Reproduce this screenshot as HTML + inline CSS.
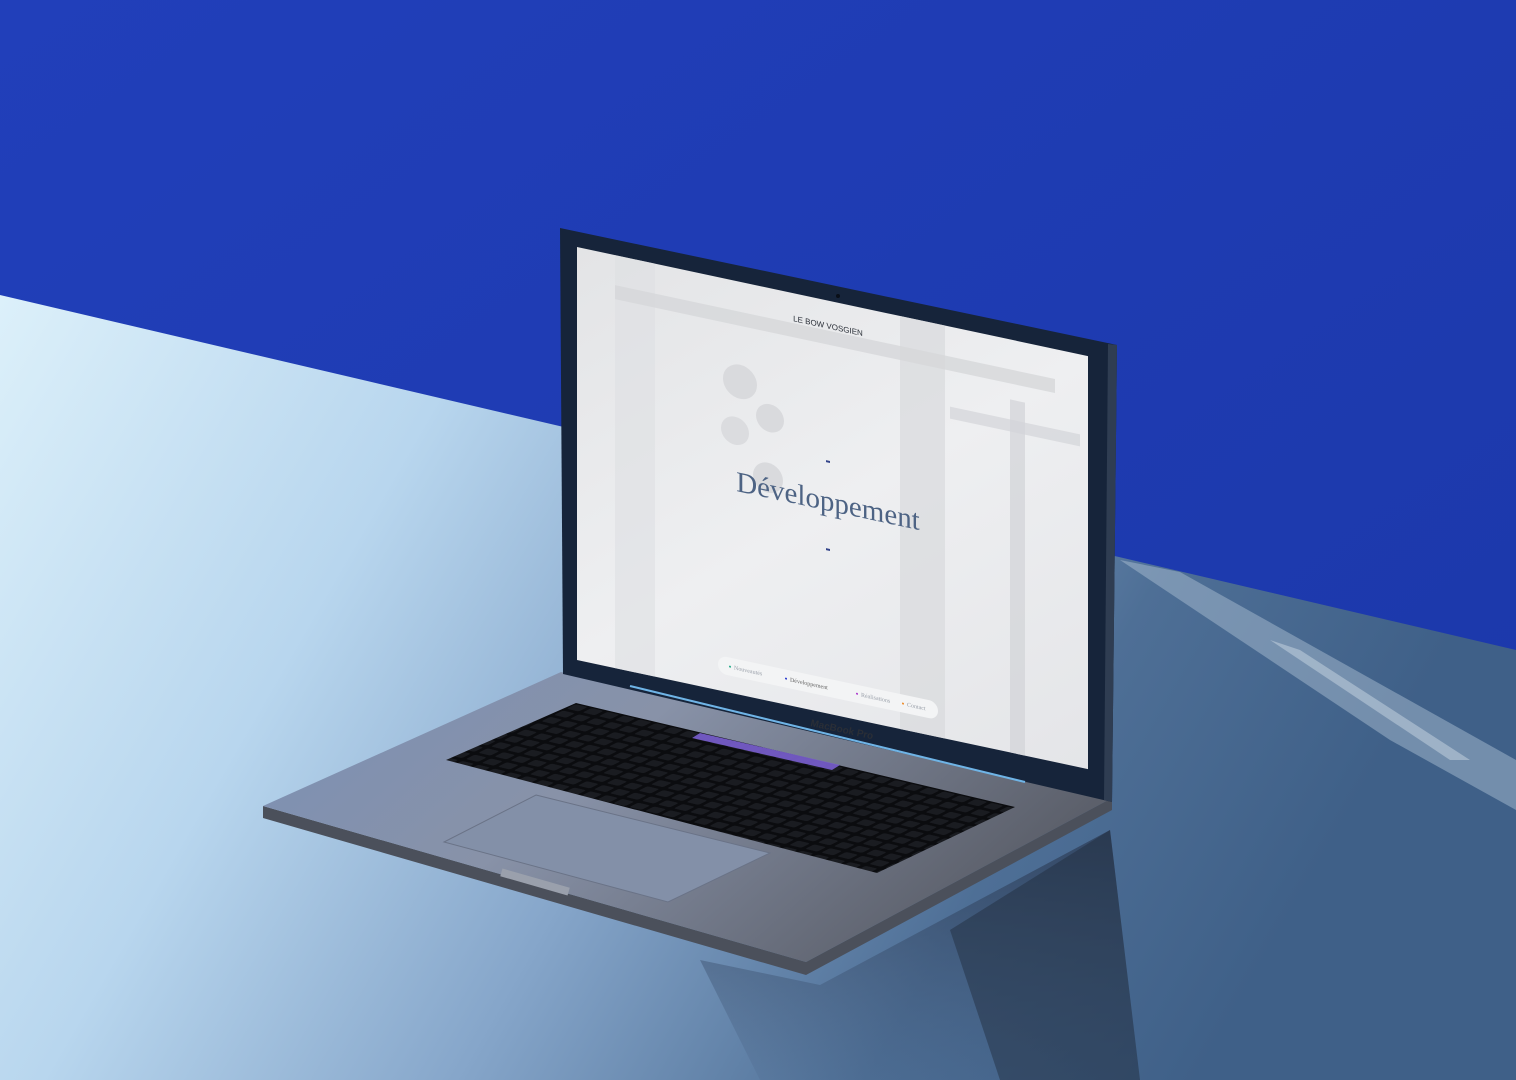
<!DOCTYPE html>
<html><head><meta charset="utf-8"><style>
html,body{margin:0;padding:0;width:1516px;height:1080px;overflow:hidden;background:#1e3cb6}
svg{display:block}
</style></head><body>
<svg width="1516" height="1080" viewBox="0 0 1516 1080" xmlns="http://www.w3.org/2000/svg">
<defs>
<linearGradient id="wall" x1="0" y1="0" x2="1" y2="1">
<stop offset="0" stop-color="#213fba"/><stop offset="1" stop-color="#1b37a8"/></linearGradient>
<linearGradient id="table" x1="0" y1="0" x2="1" y2="0.3">
<stop offset="0" stop-color="#dcf0fa"/><stop offset="0.3" stop-color="#b8d6ee"/>
<stop offset="0.55" stop-color="#86a6ca"/><stop offset="0.8" stop-color="#4e6f96"/><stop offset="1" stop-color="#3f6088"/></linearGradient>
<linearGradient id="refl" x1="0" y1="0" x2="0" y2="1">
<stop offset="0" stop-color="#2a3850" stop-opacity="0.7"/><stop offset="1" stop-color="#3a5070" stop-opacity="0.1"/></linearGradient>
<linearGradient id="base" x1="0" y1="0" x2="1" y2="0.4">
<stop offset="0" stop-color="#7b90b6"/><stop offset="0.45" stop-color="#8892a8"/><stop offset="1" stop-color="#5c606b"/></linearGradient>
<linearGradient id="scr" x1="0" y1="0" x2="1" y2="1">
<stop offset="0" stop-color="#e3e4e6"/><stop offset="0.5" stop-color="#eeeff1"/><stop offset="1" stop-color="#e4e5e8"/></linearGradient>
<pattern id="keys" width="16" height="14" patternUnits="userSpaceOnUse" patternTransform="matrix(1,0.237,-0.9,0.45,0,0)">
<rect width="16" height="14" fill="#0b0c0f"/><rect x="2" y="2" width="12" height="10" rx="2" fill="#1a1c21"/></pattern>
</defs>
<rect width="1516" height="1080" fill="url(#wall)"/>
<polygon points="0,295 1516,650 1516,1080 0,1080" fill="url(#table)"/>
<!-- marble streak -->
<polygon points="1120,560 1180,572 1516,760 1516,810 1390,740" fill="#a8bccf" opacity="0.5"/>
<polygon points="1270,640 1300,650 1470,760 1450,760" fill="#dfe8f0" opacity="0.4"/>
<!-- reflection under laptop -->
<polygon points="700,960 820,985 1110,830 1140,1080 760,1080" fill="url(#refl)"/>
<polygon points="950,930 1110,830 1140,1080 1000,1080" fill="#202a3a" opacity="0.45"/>
<!-- base -->
<polygon points="263,818 806,975 1112,810 1112,798 806,962 263,806" fill="#4b505b"/>
<polygon points="561,672 1112,798 806,962 263,806" fill="url(#base)"/>
<!-- keyboard -->
<polygon points="576,703 1015,807 877,873 446,760" fill="url(#keys)"/>
<polygon points="700,733 840,765 832,770 692,738" fill="#7a5fd0" opacity="0.9"/>
<!-- trackpad -->
<polygon points="536,795 770,853 668,902 444,842" fill="#8390a8" stroke="#6a7387" stroke-width="1"/>
<rect x="500" y="878" width="70" height="8" fill="#9aa0ac" transform="rotate(16 535 882)"/>
<!-- screen lid -->
<polygon points="560,228 1117,345 1112,802 563,674" fill="#16243a"/>
<polygon points="1108,344 1117,345 1112,802 1104,800" fill="#2f3d52"/>
<g transform="matrix(1,0.2135,0,1,0,-246.2)">
<rect x="577" y="370" width="511" height="413" fill="url(#scr)"/>
<rect x="615" y="370" width="40" height="413" fill="#dedfe2" opacity="0.6"/>
<rect x="900" y="370" width="45" height="413" fill="#d9dadd" opacity="0.7"/>
<rect x="1010" y="430" width="15" height="353" fill="#d2d3d7" opacity="0.7"/>
<rect x="615" y="400" width="440" height="14" fill="#d6d7da" opacity="0.8"/>
<rect x="950" y="450" width="130" height="12" fill="#d3d4d8" opacity="0.7"/>
<circle cx="740" cy="470" r="17" fill="#d9dadd"/><circle cx="770" cy="500" r="14" fill="#d9dadd"/>
<circle cx="735" cy="520" r="14" fill="#dbdcdf"/><circle cx="768" cy="560" r="15" fill="#d9dadd"/>
<text x="828" y="398" font-family="Liberation Sans Narrow, Liberation Sans, sans-serif" font-size="8" fill="#2a2f38" text-anchor="middle">LE BOW VOSGIEN</text>
<text x="828" y="580" font-family="Liberation Serif, serif" font-size="29" fill="#4d6384" text-anchor="middle">Développement</text>
<rect x="826" y="530" width="4" height="2" fill="#33448a"/>
<rect x="826" y="618" width="4" height="2" fill="#33448a"/>
<rect x="718" y="748" width="220" height="18" rx="9" fill="#f3f4f5"/>
<g font-family="Liberation Serif, serif" font-size="6" fill="#9aa0aa">
<circle cx="730" cy="757" r="1" fill="#2a8"/><text x="734" y="759">Nouveautés</text>
<circle cx="786" cy="757" r="1" fill="#23c"/><text x="790" y="759" fill="#666">Développement</text>
<circle cx="857" cy="757" r="1" fill="#a3c"/><text x="861" y="759">Réalisations</text>
<circle cx="903" cy="757" r="1" fill="#e82"/><text x="907" y="759">Contact</text>
</g>
</g>
<circle cx="838" cy="296" r="2" fill="#0a0f18"/>
<!-- hinge line -->
<polyline points="630,686 1025,782" stroke="#6fb4e6" stroke-width="2" fill="none"/>
<text x="810" y="726" font-family="Liberation Sans" font-size="10" font-weight="bold" fill="#2a2e36" transform="rotate(12 810 726)">MacBook Pro</text>
</svg>
</body></html>
